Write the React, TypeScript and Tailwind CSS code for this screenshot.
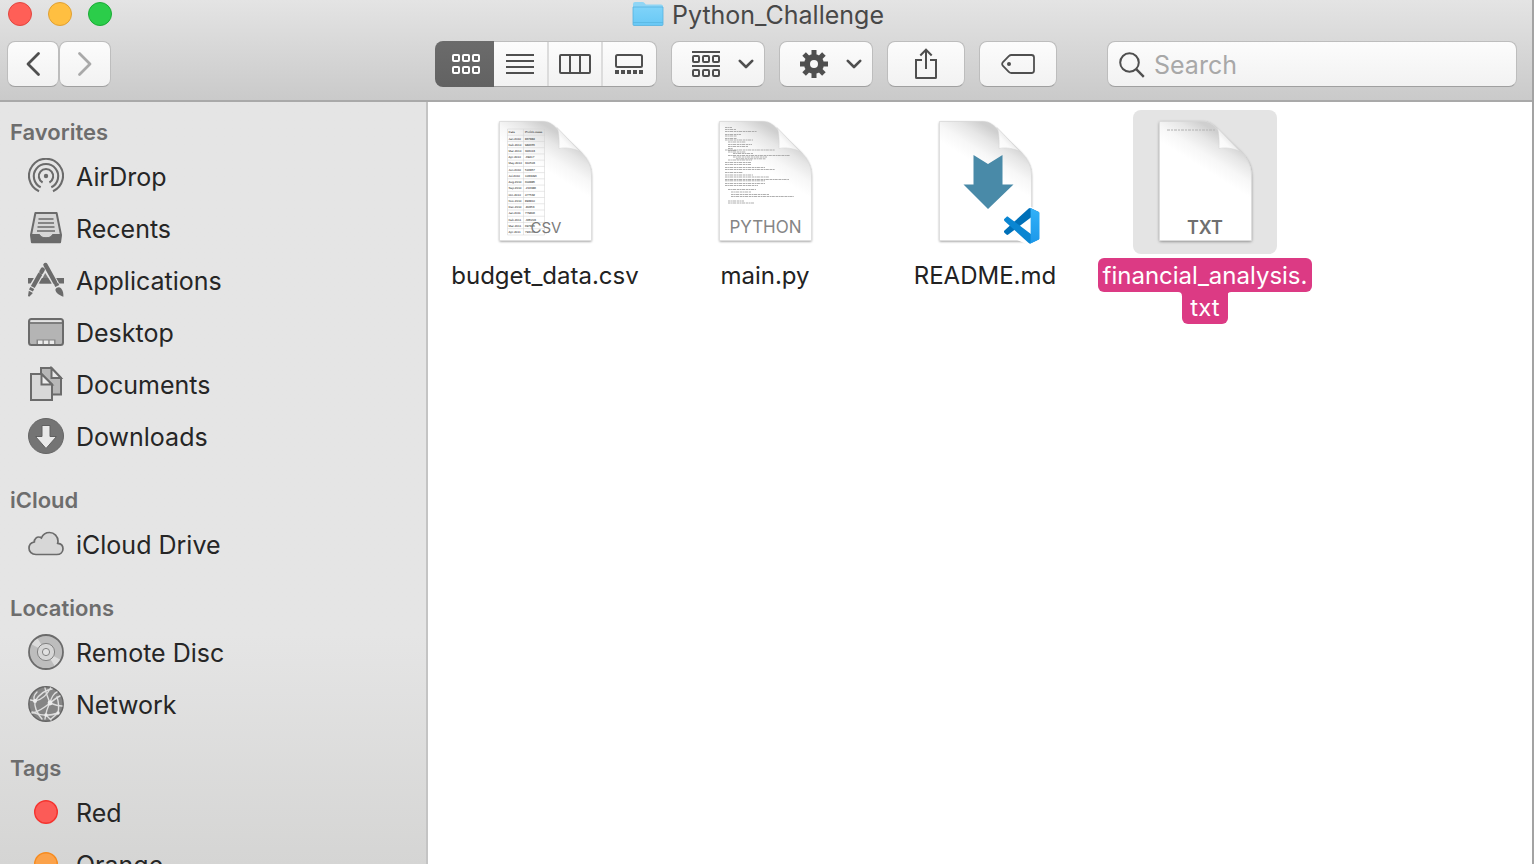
import React, { useState } from "react";

const STROKE = "#6b6b6b";
const DARK = "#4f4f4f";

/* ---------- sidebar icons (36 x 36) ---------- */

function SideSvg({ children }: { children: React.ReactNode }) {
  return (
    <svg width="36" height="36" viewBox="0 0 36 36" fill="none" aria-hidden="true" className="mb-0.5 shrink-0">
      {children}
    </svg>
  );
}

const AirDropIcon = () => (
  <SideSvg>
    <g stroke={STROKE} strokeWidth="2.1">
      <path d="M11 33.3A17 17 0 1 1 25 33.3" />
      <path d="M12.7 29.2A12.2 12.2 0 1 1 23.3 29.2" />
      <path d="M14.6 24.5A7.2 7.2 0 1 1 21.4 24.5" />
    </g>
    <circle cx="18" cy="18" r="2.2" fill={STROKE} />
  </SideSvg>
);

const RecentsIcon = () => (
  <SideSvg>
    <path d="M7.4 3h21.2L33 25l-.9 7.2H3.9L3 25z" fill="#d6d6d6" stroke={STROKE} strokeWidth="2" strokeLinejoin="round" />
    <path d="M3 24.5h8.5c1 2.6 3.4 3.2 6.5 3.2s5.5-.6 6.5-3.2H33l-.9 7.7H3.9z" fill={STROKE} stroke={STROKE} strokeWidth="1" strokeLinejoin="round" />
    <path d="M10.5 9h15M10 13h16M9.500 17h17M9 21h18" stroke={STROKE} strokeWidth="1.700" />
  </SideSvg>
);

const ApplicationsIcon = () => (
  <SideSvg>
    <path d="M0 16h36v5.500H0z" fill={STROKE} />
    <g stroke="#e5e5e5">
      <path d="M14.500 8 3.500 27" strokeWidth="7" />
      <path d="M17.500 4 30 26.500" strokeWidth="7" />
    </g>
    <path d="M17.200 11 11.800 21.500h12z" fill={STROKE} opacity=".85" />
    <g stroke={STROKE} strokeWidth="4.400">
      <path d="M14.700 7.600 13.400 9.900" strokeLinecap="round" />
      <path d="M12.400 11.600 4.800 25" />
      <path d="M4.300 26 2.900 28.500" />
      <path d="M17.500 3 27 20.200" strokeLinecap="round" />
      <path d="M28 21.500 29.300 24" />
    </g>
    <path d="M.8 28.700 4.900 31 1.200 34.800 0 34z" fill={STROKE} />
    <path d="M27.400 27.500c1-2.300 4-3 5.600-1.200 2.200 2.500 2.500 5.200 2.400 8.500-3.600-1.500-8-3.500-8-7.300z" fill={STROKE} />
  </SideSvg>
);

const DesktopIcon = () => (
  <SideSvg>
    <rect x="1" y="5" width="34" height="26" rx="2.500" fill="#b4b4b4" stroke={STROKE} strokeWidth="2" />
    <path d="M2.500 6.200h31v2h-31z" fill="#e4e4e4" />
    <path d="M1 9h34" stroke={STROKE} strokeWidth="1.500" />
    <path d="M8.500 25.500h19V30h-19z" fill="#858585" />
    <path d="M10 26.500h4.500V30H10zM15.800 26.500h4.500V30h-4.500zM21.600 26.500h4.500V30h-4.500z" fill="#ececec" />
  </SideSvg>
);

const DocumentsIcon = () => (
  <SideSvg>
    <g stroke={STROKE} strokeWidth="2">
      <path d="M13 2h10.500L33 12v16.500H13z" fill="#b7b7b7" />
      <path d="M23.500 2v10H33z" fill="#e8e8e8" />
      <path d="M3 8h10.500L24 18.500V34H3z" fill="#d8d8d8" />
      <path d="M13.500 8v10.500H24z" fill="#ececec" />
    </g>
  </SideSvg>
);

const DownloadsIcon = () => (
  <SideSvg>
    <circle cx="18" cy="18" r="17.500" fill="#747474" stroke="#666" strokeWidth="1" />
    <path d="M14 7.500h8v11h6.500L18 30.500 7.500 18.500H14z" fill="#e9e9e9" stroke="#606060" strokeWidth="1" />
  </SideSvg>
);

const CloudIcon = () => (
  <SideSvg>
    <path
      d="M8 29.500C3.700 29.500 1 26.800 1 23.200c0-3.300 2.200-5.600 5.300-6.200-.1-3.400 2.600-5.600 5.600-4.800.6.100 1 .4 1.500.7 1.400-3.200 4.500-5.400 8.100-5.400 4.900 0 8.500 3.900 8.500 8.600 0 .9-.1 1.500-.3 2.200 3.200.3 5.300 2.500 5.300 5.400 0 3.300-2.500 5.800-6.300 5.800z"
      fill="#d7d7d7"
      stroke={STROKE}
      strokeWidth="1.700"
      transform="translate(0 -1)"
    />
  </SideSvg>
);

const DiscIcon = () => (
  <SideSvg>
    <circle cx="18" cy="18" r="17" fill="#bdbdbd" />
    <path d="M18 18 3 10 9 3.500zM18 18 33 26 27 32.500z" fill="#dcdcdc" />
    <circle cx="18" cy="18" r="17" stroke={STROKE} strokeWidth="1.800" />
    <circle cx="18" cy="18" r="8.600" fill="#d6d6d6" stroke="#828282" strokeWidth="1" />
    <circle cx="18" cy="18" r="3.600" fill="#e2e2e2" stroke="#828282" strokeWidth="1" />
  </SideSvg>
);

const NetworkIcon = () => (
  <SideSvg>
    <circle cx="18" cy="18" r="17.200" fill="#858585" stroke="#656565" strokeWidth="1.400" />
    <g stroke="#dedede" strokeWidth="1.400" strokeLinecap="round">
      <path d="M2.500 14 7 15C13 14 19 9 22.500 2M7 15C11 9 16 4 24 3M7 15c-1 6 1 11 7 18M7 15c-2-3-1-6 2-9" />
      <path d="M22 17C20 12 18 8 17 2M22 17c5-4 8-6 10-7M22 17c5 2 9 3 12 3M22 17c-3 5-4 9-5 16M22 17c-6 5-12 9-18 10M22 17c1-5 4-10 7-11" />
      <path d="M4 26c9 4 18 4 26 1M30 27c1-5 1-10-1-16M30 27l-7 6M18 29l5 5" />
    </g>
    <g fill="#ececec">
      <circle cx="7" cy="15" r="2" />
      <circle cx="22" cy="17" r="2.400" />
      <circle cx="18" cy="29" r="1.700" />
      <circle cx="30" cy="27" r="1.700" />
    </g>
  </SideSvg>
);

const TagDot = ({ fill, stroke }: { fill: string; stroke: string }) => (
  <SideSvg>
    <circle cx="18" cy="18" r="11.300" fill={fill} stroke={stroke} strokeWidth="1.400" />
  </SideSvg>
);

const SECTIONS = [
  {
    title: "Favorites",
    items: [
      { label: "AirDrop", icon: <AirDropIcon /> },
      { label: "Recents", icon: <RecentsIcon /> },
      { label: "Applications", icon: <ApplicationsIcon /> },
      { label: "Desktop", icon: <DesktopIcon /> },
      { label: "Documents", icon: <DocumentsIcon /> },
      { label: "Downloads", icon: <DownloadsIcon /> },
    ],
  },
  { title: "iCloud", items: [{ label: "iCloud Drive", icon: <CloudIcon /> }] },
  {
    title: "Locations",
    items: [
      { label: "Remote Disc", icon: <DiscIcon /> },
      { label: "Network", icon: <NetworkIcon /> },
    ],
  },
  {
    title: "Tags",
    items: [
      { label: "Red", icon: <TagDot fill="#fc5b57" stroke="#f5332e" /> },
      { label: "Orange", icon: <TagDot fill="#fba24a" stroke="#f68b1f" /> },
    ],
  },
];

function Sidebar() {
  return (
    <nav
      aria-label="Sidebar"
      className="flex w-[428px] shrink-0 flex-col gap-[18px] overflow-hidden border-r-2 border-[#c4c4c4] bg-linear-to-b from-[#e5e5e5] from-70% to-[#d5d5d4] pt-[11px]"
    >
      {SECTIONS.map((section) => (
        <section key={section.title} className="shrink-0">
          <h2 className="flex h-[38px] items-center pl-[10px] text-[22px] font-semibold text-[#6d6d6d]">{section.title}</h2>
          <ul>
            {section.items.map((item) => (
              <li key={item.label}>
                <a href="#" className="flex h-[52px] items-center gap-3 pl-7 text-[25px] text-[#262626]">
                  {item.icon}
                  <span className="pt-0.5">{item.label}</span>
                </a>
              </li>
            ))}
          </ul>
        </section>
      ))}
    </nav>
  );
}

/* ---------- toolbar icons ---------- */

const Chevron = () => (
  <svg width="16" height="10" viewBox="0 0 16 10" fill="none" aria-hidden="true">
    <path d="M1.800 1.800 8 8l6.200-6.200" stroke={DARK} strokeWidth="2.600" strokeLinecap="round" strokeLinejoin="round" />
  </svg>
);

const GridIcon = () => (
  <svg width="28" height="20" viewBox="0 0 28 20" fill="none" stroke="#fff" strokeWidth="2" aria-hidden="true">
    {[1, 11, 21].map((x) =>
      [1, 13].map((y) => <rect key={`${x}-${y}`} x={x} y={y} width="6" height="6" rx="1" />)
    )}
  </svg>
);

const ListIcon = () => (
  <svg width="28" height="20" viewBox="0 0 28 20" aria-hidden="true">
    <path d="M0 1h28M0 7h28M0 13h28M0 19h28" stroke={DARK} strokeWidth="2" />
  </svg>
);

const ColumnsIcon = () => (
  <svg width="32" height="20" viewBox="0 0 32 20" fill="none" stroke={DARK} strokeWidth="2" aria-hidden="true">
    <rect x="1" y="1" width="30" height="18" rx="1" />
    <path d="M11 1v18M21 1v18" />
  </svg>
);

const GalleryIcon = () => (
  <svg width="28" height="20" viewBox="0 0 28 20" fill="none" aria-hidden="true">
    <rect x="1" y="1" width="26" height="12" rx="1.500" stroke={DARK} strokeWidth="2" />
    <path d="M0 16h4v4H0zM6 16h4v4H6zM12 16h4v4h-4zM18 16h4v4h-4zM24 16h4v4h-4z" fill={DARK} />
  </svg>
);

const GroupIcon = () => (
  <svg width="28" height="26" viewBox="0 0 28 26" fill="none" stroke={DARK} strokeWidth="2" aria-hidden="true">
    <path d="M0 1h28M0 15h28" />
    {[1, 11, 21].map((x) =>
      [5, 19].map((y) => <rect key={`${x}-${y}`} x={x} y={y} width="6" height="6" rx="1" />)
    )}
  </svg>
);

const GearIcon = () => (
  <svg width="28" height="28" viewBox="0 0 28 28" aria-hidden="true">
    {[0, 45, 90, 135].map((a) => (
      <rect key={a} x="11.500" y="0" width="5" height="28" fill={DARK} transform={`rotate(${a} 14 14)`} />
    ))}
    <circle cx="14" cy="14" r="10" fill={DARK} />
    <circle cx="14" cy="14" r="4" fill="#f9f9f9" />
  </svg>
);

const ShareIcon = () => (
  <svg width="24" height="32" viewBox="0 0 24 32" fill="none" stroke={DARK} strokeWidth="2" aria-hidden="true">
    <path d="M8 12H2v17.500q0 .5.500.5h19q.5 0 .5-.5V12h-6" />
    <path d="M12 21V1.500M6.300 7.500 12 1.700 17.700 7.500" />
  </svg>
);

const TagIcon = () => (
  <svg width="34" height="20" viewBox="0 0 34 20" fill="none" aria-hidden="true">
    <path
      d="M10.500 1H30.500Q33 1 33 3.500v13Q33 19 30.500 19h-20Q9 19 7.800 17.800L2 12Q.3 10 2 8l5.800-5.800Q9 1 10.500 1z"
      stroke={DARK}
      strokeWidth="1.800"
    />
    <circle cx="8" cy="10" r="2" fill={DARK} />
  </svg>
);

const FolderIcon = () => (
  <svg width="32" height="26" viewBox="0 0 32 26" aria-hidden="true">
    <defs>
      <linearGradient id="folder" x1="0" y1="0" x2="0" y2="1">
        <stop offset="0" stopColor="#7fd3f9" />
        <stop offset="1" stopColor="#68c8f5" />
      </linearGradient>
    </defs>
    <path d="M1 3Q1 1 3 1h7.500q1.200 0 2 1l1.300 1.500H29q2 0 2 2V22H1z" fill="#8fd5f5" />
    <path d="M1 6h30v17.500q0 1-1 1H2q-1 0-1-1z" fill="url(#folder)" stroke="#55b2df" strokeWidth=".8" />
    <path d="M1 21.500h30" stroke="#57b6e2" strokeWidth=".8" />
  </svg>
);

const VIEWS = [
  { label: "List view", icon: <ListIcon /> },
  { label: "Column view", icon: <ColumnsIcon /> },
  { label: "Gallery view", icon: <GalleryIcon /> },
];

const BUTTON =
  "flex h-[46px] items-center justify-center rounded-lg border border-[#bdbdbd] border-b-[#a0a0a0] bg-linear-to-b from-[#fcfcfc] to-[#f2f2f2]";

function Toolbar() {
  return (
    <header className="h-[102px] shrink-0 border-b-2 border-[#a9a9a9] bg-linear-to-b from-[#e4e4e4] to-[#cacaca]">
      <div className="grid h-[28px] grid-cols-[1fr_auto_1fr] items-center pr-6 pl-2">
        <div className="flex gap-4">
          <button aria-label="Close" className="size-6 rounded-full border border-[#e2463f] bg-[#ff5f57]" />
          <button aria-label="Minimize" className="size-6 rounded-full border border-[#e0a033] bg-[#ffbf41]" />
          <button aria-label="Zoom" className="size-6 rounded-full border border-[#1aab35] bg-[#2bcd4a]" />
        </div>
        <div className="flex items-center gap-2">
          <FolderIcon />
          <h1 className="pt-0.5 text-[25px] leading-[26px] text-[#484848]">Python_Challenge</h1>
        </div>
      </div>

      <div className="mt-[13px] flex items-center pr-[15px] pl-[7px]">
        <div className="flex w-[428px] shrink-0">
          <button aria-label="Back" className={`${BUTTON} w-[52px]`}>
            <svg width="16" height="26" viewBox="0 0 16 26" fill="none" aria-hidden="true">
              <path d="M13.500 2.500 3 13l10.500 10.500" stroke={DARK} strokeWidth="2.800" strokeLinecap="round" strokeLinejoin="round" />
            </svg>
          </button>
          <button aria-label="Forward" className={`${BUTTON} w-[52px]`}>
            <svg width="16" height="26" viewBox="0 0 16 26" fill="none" aria-hidden="true">
              <path d="M2.500 2.500 13 13 2.500 23.500" stroke="#a9a9a9" strokeWidth="2.800" strokeLinecap="round" strokeLinejoin="round" />
            </svg>
          </button>
        </div>

        <div className="flex w-[222px] shrink-0">
          <button
            aria-label="Icon view"
            aria-pressed="true"
            className="flex h-[46px] w-[59px] shrink-0 items-center justify-center rounded-l-lg bg-linear-to-b from-[#6b6b6b] to-[#626262] pl-[3px]"
          >
            <GridIcon />
          </button>
          <div className={`${BUTTON} flex-1 divide-x-2 divide-[#dcdcdc] rounded-l-none border-l-0`}>
            {VIEWS.map((view) => (
              <button key={view.label} aria-label={view.label} aria-pressed="false" className="flex h-11 flex-1 items-center justify-center pr-px">
                {view.icon}
              </button>
            ))}
          </div>
        </div>

        <div className="ml-[14px] flex shrink-0 gap-[14px]">
          <button aria-label="Group items" className={`${BUTTON} w-[94px] gap-[18px] pl-[10px]`}>
            <GroupIcon />
            <Chevron />
          </button>
          <button aria-label="Actions" className={`${BUTTON} w-[94px] gap-[18px] pl-[10px]`}>
            <GearIcon />
            <Chevron />
          </button>
          <button aria-label="Share" className={`${BUTTON} w-[78px]`}>
            <ShareIcon />
          </button>
          <button aria-label="Edit tags" className={`${BUTTON} w-[78px]`}>
            <TagIcon />
          </button>
        </div>

        <label className={`${BUTTON} ml-[50px] min-w-0 flex-1 gap-[9px] pr-[10px] pl-[11px]`}>
          <svg width="26" height="28" viewBox="0 0 26 28" fill="none" stroke={DARK} aria-hidden="true" className="shrink-0">
            <circle cx="10.500" cy="12.500" r="9.300" strokeWidth="2" />
            <path d="m17.200 19.200 7.600 7.600" strokeWidth="2.400" />
          </svg>
          <input
            type="search"
            aria-label="Search"
            placeholder="Search"
            className="min-w-0 flex-1 bg-transparent pt-[3px] text-[25px] text-[#333] outline-none placeholder:text-[#a8a8a8]"
          />
        </label>
      </div>
    </header>
  );
}

/* ---------- document icons (144 x 144) ---------- */

function Page({ id, soft, children }: { id: string; soft?: boolean; children?: React.ReactNode }) {
  const outline = "M26.500 11.500H70C77 11.500 81 15.500 86 21L105 39C113 46.500 118.500 54 118.500 65V130.500H26.500z";
  return (
    <svg width="144" height="144" viewBox="0 0 144 144" aria-hidden="true">
      <defs>
        <linearGradient id={`${id}-body`} gradientUnits="userSpaceOnUse" x1="96" y1="30" x2="76" y2="62">
          <stop offset="0" stopColor="#cfcfcf" />
          <stop offset=".3" stopColor="#e6e6e6" />
          <stop offset=".65" stopColor="#f7f7f7" />
          <stop offset="1" stopColor="#fff" />
        </linearGradient>
        <linearGradient id={`${id}-fold`} x1="0" y1="1" x2=".6" y2=".4">
          <stop offset="0" stopColor="#fff" />
          <stop offset=".6" stopColor="#fafafa" />
          <stop offset="1" stopColor="#e3e3e3" />
        </linearGradient>
        <filter id={`${id}-shadow`} x="-10%" y="-10%" width="120%" height="120%">
          <feDropShadow dx="0" dy="1" stdDeviation={soft ? 1.5 : 1} floodOpacity=".45" />
        </filter>
      </defs>
      <path d={outline} fill="#fff" filter={`url(#${id}-shadow)`} />
      <path d={outline} fill={`url(#${id}-body)`} stroke="#cfcfcf" strokeWidth=".6" />
      <path d="M84 17.500C86 22 86.400 30 86 38.500 93 37 101 38.500 107 41.500z" fill={`url(#${id}-fold)`} stroke="#d0d0d0" strokeWidth=".5" />
      {children}
    </svg>
  );
}

const ROWS = [
  ["Date", "Profit/Losses"],
  ["Jan-2010", "867884"],
  ["Feb-2010", "984655"],
  ["Mar-2010", "322013"],
  ["Apr-2010", "-69417"],
  ["May-2010", "310503"],
  ["Jun-2010", "522857"],
  ["Jul-2010", "1033096"],
  ["Aug-2010", "604885"],
  ["Sep-2010", "-216386"],
  ["Oct-2010", "477532"],
  ["Nov-2010", "893810"],
  ["Dec-2010", "-80353"],
  ["Jan-2011", "779806"],
  ["Feb-2011", "-335203"],
  ["Mar-2011", "697845"],
  ["Apr-2011", "793163"],
];

const CsvPage = () => (
  <Page id="csv">
    <g stroke="#d0d0d0" strokeWidth=".5">
      <path d="M34.500 19v106M50.500 19v106M71.500 19v106" />
      {ROWS.map((row, i) => (
        <path key={row[0]} d={`M34.500 ${19 + i * 6.23}h37`} />
      ))}
      <path d="M34.500 125h37" />
    </g>
    <g fontSize="3" fill="#222" fontFamily="Liberation Sans, sans-serif" textRendering="geometricPrecision">
      {ROWS.map((row, i) => (
        <React.Fragment key={row[0]}>
          <text x="35.500" y={23.3 + i * 6.23}>{row[0]}</text>
          <text x="52" y={23.3 + i * 6.23}>{row[1]}</text>
        </React.Fragment>
      ))}
    </g>
    <text x="73" y="123" textAnchor="middle" fontSize="15" fill="#7a7a7a">CSV</text>
  </Page>
);

/* x, y and length of each line in the source preview */
const CODE: [number, number, number][] = [
  [32, 17.5, 7], [32, 19.5, 11], [32, 21.5, 32], [32, 24.5, 16], [32, 26, 12],
  [32, 28.5, 12], [32, 30, 28], [35, 32, 18], [35, 34.5, 24], [35, 36.5, 20],
  [35, 38.5, 5], [35, 40.5, 9], [32, 40, 50], [35, 42, 18], [40, 43.5, 20],
  [35, 45.5, 62], [40, 47, 34], [43, 48.8, 30], [35, 50, 24], [32, 52.5, 26],
  [32, 54.5, 26], [32, 57.5, 40], [32, 59.5, 50], [32, 62.5, 18], [32, 65, 28],
  [32, 67, 44], [32, 69.5, 64], [32, 70.8, 40], [32, 73.5, 40], [32, 75.5, 33],
  [35, 79.5, 28], [38, 82, 20], [38, 84.5, 38], [38, 86.5, 63], [35, 91, 16], [35, 93, 26],
];

const PythonPage = () => (
  <Page id="python">
    <g stroke="#a6a6a6" strokeWidth=".9" strokeDasharray="2.600 .5 1.400 .4 3.300 .7">
      {CODE.map(([x, y, w], i) => (
        <path key={i} d={`M${x} ${y}h${w}`} />
      ))}
    </g>
    <text x="72.500" y="123" textAnchor="middle" fontSize="17" fill="#858585">PYTHON</text>
  </Page>
);

const MarkdownPage = () => (
  <Page id="md">
    <defs>
      <linearGradient id="code-side" x1="0" y1="0" x2="0" y2="1">
        <stop offset="0" stopColor="#32b1f8" />
        <stop offset="1" stopColor="#1c98ea" />
      </linearGradient>
    </defs>
    <path d="M60.500 45 75 54 89.500 45v29.500h11L75 99 50.500 74.500h10z" fill="#498aa8" />
    <g transform="translate(91 98) scale(.355)">
      <path d="M72 0 100 14v72l-28 14L0 68V32z" fill="#fff" stroke="#fff" strokeWidth="10" />
      <path fill="#0070b8" d="M96.461 10.796 75.857.876C73.472-.273 70.622.212 68.750 2.083L1.299 63.583c-1.814 1.654-1.812 4.511.004 6.162l5.510 5.009c1.485 1.350 3.722 1.450 5.321.237L93.361 13.370C96.086 11.303 100 13.246 100 16.667v-.24c0-2.401-1.375-4.589-3.539-5.631z" />
      <path fill="#0a86d2" d="m96.461 89.204-20.604 9.920c-2.385 1.149-5.235.664-7.107-1.207L1.299 36.417c-1.814-1.654-1.812-4.511.004-6.162l5.510-5.009c1.485-1.350 3.722-1.450 5.321-.237L93.361 86.630C96.086 88.697 100 86.754 100 83.333v.24c0 2.401-1.375 4.589-3.539 5.631z" />
      <path fill="url(#code-side)" d="M75.858 99.126c-2.386 1.148-5.236.662-7.108-1.209C71.056 100.223 75 98.590 75 95.328V4.672C75 1.410 71.056-.223 68.750 2.083 70.622.211 73.472-.274 75.858.874l20.601 9.907C98.623 11.822 100 14.011 100 16.413v67.174c0 2.402-1.377 4.592-3.541 5.633z" />
    </g>
  </Page>
);

const TextPage = () => (
  <Page id="txt" soft>
    <path d="M34 20h49" stroke="#bbb" strokeWidth="2" strokeDasharray="3 1 2 1" opacity=".6" />
    <text x="72" y="124" textAnchor="middle" fontSize="18" fontWeight="600" fill="#6f6f6f">TXT</text>
  </Page>
);

const FILES = [
  { lines: ["budget_data.csv"], icon: <CsvPage /> },
  { lines: ["main.py"], icon: <PythonPage /> },
  { lines: ["README.md"], icon: <MarkdownPage /> },
  { lines: ["financial_analysis.", "txt"], icon: <TextPage /> },
];

function Files() {
  const [selected, setSelected] = useState(3);
  return (
    <main className="min-w-0 flex-1 bg-white pt-2 pl-[7px]">
      <ul className="flex flex-wrap">
        {FILES.map((file, i) => {
          const on = selected === i;
          return (
            <li key={file.lines[0]} className="w-[220px]">
              <button onClick={() => setSelected(i)} aria-pressed={on} className="flex w-full flex-col items-center">
                <span className={on ? "rounded-lg bg-[#e4e4e4]" : "rounded-lg"}>{file.icon}</span>
                <span className="mt-1 flex flex-col items-center text-[24px] leading-[32px]">
                  {file.lines.map((line, n) => (
                    <span
                      key={line}
                      className={
                        !on
                          ? "pt-0.5 text-[#222]"
                          : n === 0
                            ? "rounded-md bg-[#dc3a84] px-[5px] pt-0.5 text-white"
                            : "relative rounded-b-md bg-[#dc3a84] px-2 text-white"
                      }
                    >
                      {line}
                      {on && n > 0 && (
                        <svg viewBox="0 0 54 4" preserveAspectRatio="none" className="absolute top-0 -left-1 h-1 w-[calc(100%+8px)]" aria-hidden="true">
                          <path d="M0 0h54q-4 0-4 4H4q0-4-4-4z" fill="#dc3a84" />
                        </svg>
                      )}
                    </span>
                  ))}
                </span>
              </button>
            </li>
          );
        })}
      </ul>
    </main>
  );
}

export default function App() {
  return (
    <div className="flex h-screen flex-col overflow-hidden border-r-2 border-[#a3a3a3] bg-white font-['Inter','Liberation_Sans',sans-serif]">
      <Toolbar />
      <div className="flex min-h-0 flex-1">
        <Sidebar />
        <Files />
      </div>
    </div>
  );
}
